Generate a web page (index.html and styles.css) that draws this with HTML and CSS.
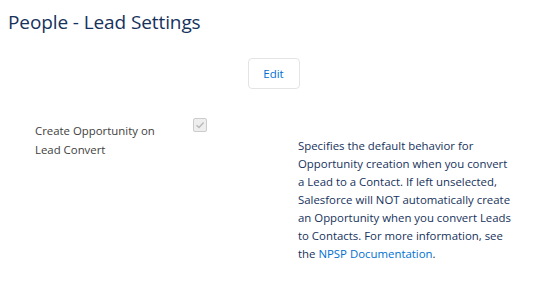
FILE: index.html
```html
<!DOCTYPE html>
<html>
<head>
<meta charset="utf-8">
<link rel="stylesheet" href="styles.css">
</head>
<body>
<div class="page">
  <h1 class="title">People - Lead Settings</h1>
  <div class="actions">
    <button class="btn">Edit</button>
  </div>
  <div class="setting">
    <div class="label">Create Opportunity on<br>Lead Convert</div>
    <div class="control">
      <span class="checkbox">
        <svg width="10" height="10" viewBox="0 0 10 10"><path d="M1.5 5.2 L4 7.5 L8.6 2.6" fill="none" stroke="#b9b9b9" stroke-width="1.4"/></svg>
      </span>
    </div>
    <div class="help">Specifies the default behavior for Opportunity creation when you convert <span class="keep">a Lead</span> to a Contact. If left unselected, Salesforce will NOT automatically create an Opportunity when you convert Leads to Contacts. For more information, see <span class="keep">the <a class="link" href="#">NPSP Documentation</a>.</span></div>
  </div>
</div>
</body>
</html>
```
FILE: styles.css
```css
html, body {
  margin: 0;
  padding: 0;
  background: #ffffff;
}
.page {
  font-family: "Open Sans", "Noto Sans", sans-serif;
  padding: 10px 0 0 8px;
}
.title {
  margin: 0;
  font-size: 19px;
  font-weight: 400;
  line-height: 25px;
  color: #16325c;
  letter-spacing: -0.1px;
}
.actions {
  display: flex;
  justify-content: center;
  padding: 23px 0 0 0;
}
.btn {
  width: 52px;
  height: 31px;
  border: 1px solid #e4e4e4;
  border-radius: 4px;
  background: #fff;
  color: #0070d2;
  font-family: inherit;
  font-size: 11.5px;
  padding: 0;
  margin-right: 3px;
}
.setting {
  display: flex;
  padding: 29px 0 0 27px;
}
.label {
  width: 158px;
  font-size: 11.4px;
  line-height: 19px;
  color: #3e3e3c;
  padding-top: 3px;
}
.control {
  width: 105px;
}
.checkbox {
  display: flex;
  align-items: center;
  justify-content: center;
  box-sizing: border-box;
  width: 14px;
  height: 14px;
  border: 1px solid #cccccc;
  border-radius: 2px;
  background: #eeeeee;
}
.help {
  width: 226px;
  font-size: 11.4px;
  line-height: 18px;
  color: #16325c;
  padding-top: 19px;
}
.keep {
  white-space: nowrap;
}
.link {
  color: #0070d2;
  text-decoration: none;
}
```
